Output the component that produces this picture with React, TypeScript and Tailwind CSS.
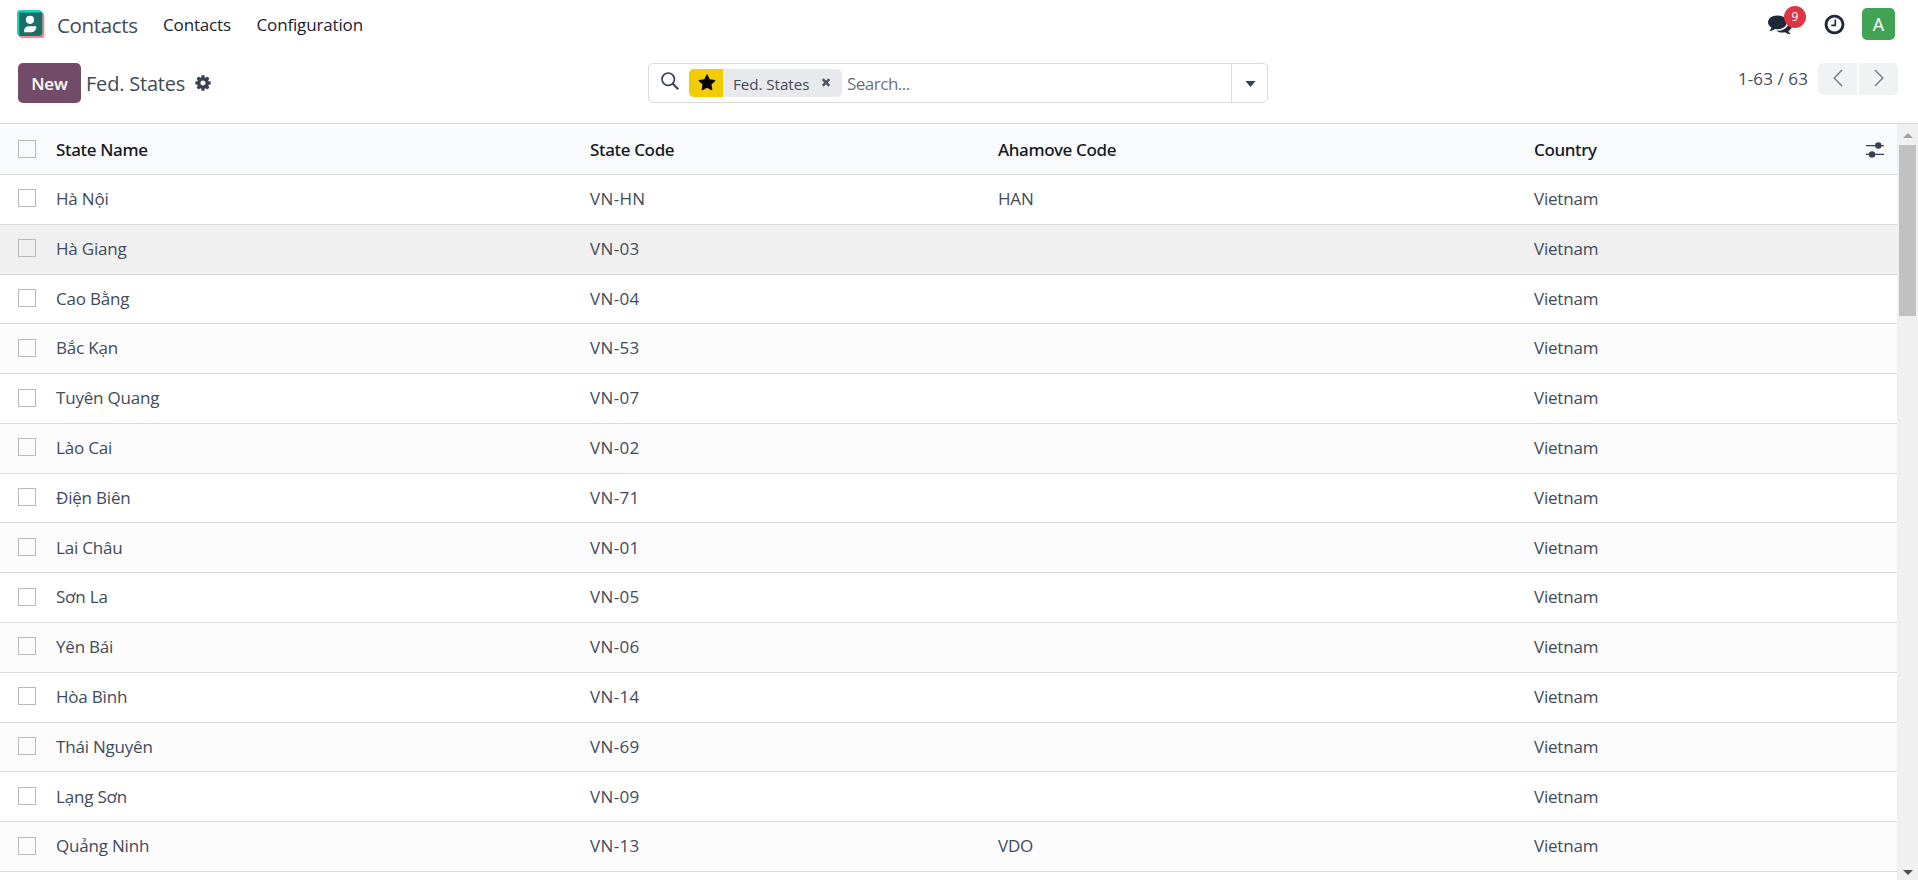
import React from "react";

type State = { name: string; code: string; ahamove?: string };

const STATES: State[] = [
  { name: "Hà Nội", code: "VN-HN", ahamove: "HAN" },
  { name: "Hà Giang", code: "VN-03" },
  { name: "Cao Bằng", code: "VN-04" },
  { name: "Bắc Kạn", code: "VN-53" },
  { name: "Tuyên Quang", code: "VN-07" },
  { name: "Lào Cai", code: "VN-02" },
  { name: "Điện Biên", code: "VN-71" },
  { name: "Lai Châu", code: "VN-01" },
  { name: "Sơn La", code: "VN-05" },
  { name: "Yên Bái", code: "VN-06" },
  { name: "Hòa Bình", code: "VN-14" },
  { name: "Thái Nguyên", code: "VN-69" },
  { name: "Lạng Sơn", code: "VN-09" },
  { name: "Quảng Ninh", code: "VN-13", ahamove: "VDO" },
];

const PATHS = {
  cog: "M1152 896q0-106-75-181t-181-75-181 75-75 181 75 181 181 75 181-75 75-181zm512-109v222q0 12-8 23t-20 13l-185 28q-19 54-39 91 35 50 107 138 10 12 10 25t-9 23q-27 37-99 108t-94 71q-12 0-26-9l-138-108q-44 23-91 38-16 136-29 186-7 28-36 28h-222q-14 0-24.5-8.5t-11.5-21.5l-28-184q-49-16-90-37l-141 107q-10 9-25 9-14 0-25-11-126-114-165-168-7-10-7-23 0-12 8-23 15-21 51-66.5t54-70.5q-27-50-41-99l-183-27q-13-2-21-12.5t-8-23.5v-222q0-12 8-23t19-13l186-28q14-46 39-92-40-57-107-138-10-12-10-24 0-10 9-23 26-36 98.5-107.5t94.5-71.5q13 0 26 10l138 107q44-23 91-38 16-136 29-186 7-28 36-28h222q14 0 24.5 8.5t11.5 21.5l28 184q49 16 90 37l142-107q9-9 24-9 13 0 25 10 129 119 165 170 7 8 7 22 0 12-8 23-15 21-51 66.5t-54 70.5q26 50 41 98l183 28q13 2 21 12.5t8 23.5z",
  comments:
    "M1408 768q0 139-94 257t-256.5 186.5-353.5 68.5q-86 0-176-16-124 88-278 128-36 9-86 16h-3q-11 0-20.5-8t-11.5-21q-1-3-1-6.5t.5-6.5 2-6l2.5-5 3.5-5.5 4-5 4.5-5 4-4.5q5-6 23-25t26-29.5 22.5-29 25-38.5 20.5-44q-124-72-195-177t-71-224q0-139 94-257t256.5-186.5 353.5-68.5 353.5 68.5 256.5 186.5 94 257zm384 256q0 120-71 224.5t-195 176.5q10 24 20.5 44t25 38.5 22.5 29 26 29.5 23 25q1 1 4 4.5t4.5 5 4 5 3.5 5.5l2.5 5 2 6 .5 6.5-1 6.5q-3 14-13 22t-22 7q-50-7-86-16-154-40-278-128-90 16-176 16-271 0-472-132 58 4 88 4 161 0 309-45t264-129q125-92 192-212t67-254q0-77-23-152 129 71 204 178t75 230z",
  clock:
    "M1024 544v448q0 14-9 23t-23 9h-320q-14 0-23-9t-9-23v-64q0-14 9-23t23-9h224v-352q0-14 9-23t23-9h64q14 0 23 9t9 23zm416 352q0-148-73-273t-198-198-273-73-273 73-198 198-73 273 73 273 198 198 273 73 273-73 198-198 73-273zm224 0q0 209-103 385.5t-279.5 279.5-385.5 103-385.5-103-279.5-279.5-103-385.5 103-385.5 279.5-279.5 385.5-103 385.5 103 279.5 279.5 103 385.5z",
  star: "M1728 647q0 22-26 48l-363 354 86 500q1 7 1 20 0 21-10.5 35.5t-30.5 14.5q-19 0-40-12l-449-236-449 236q-22 12-40 12-21 0-31.5-14.5t-10.5-35.5q0-6 2-20l86-500-364-354q-25-27-25-48 0-37 56-46l502-73 225-455q19-41 49-41t49 41l225 455 502 73q56 9 56 46z",
  times:
    "M1490 1322q0 40-28 68l-136 136q-28 28-68 28t-68-28l-294-294-294 294q-28 28-68 28t-68-28l-136-136q-28-28-28-68t28-68l294-294-294-294q-28-28-28-68t28-68l136-136q28-28 68-28t68 28l294 294 294-294q28-28 68-28t68 28l136 136q28 28 28 68t-28 68l-294 294 294 294q28 28 28 68z",
};

function Glyph({ name, className }: { name: keyof typeof PATHS; className: string }) {
  return (
    <svg viewBox="0 0 1792 1792" fill="currentColor" className={className} aria-hidden="true">
      <path d={PATHS[name]} />
    </svg>
  );
}

function AppLogo() {
  return (
    <svg viewBox="0 0 28 28" className="h-7 w-7" aria-hidden="true">
      <rect x="2" y="2.6" width="25.4" height="25.6" rx="3.4" fill="#fc868b" />
      <rect x="0" y="0" width="25.3" height="26" rx="3.4" fill="#1ad3bb" />
      <path d="M2.2 2.6H25.3V22.6a3.4 3.4 0 0 1-3.4 3.4H2.2z" fill="#1a6f66" />
      <circle cx="13" cy="9.8" r="4.1" fill="#fff" />
      <path d="M7.1 22.2v-1.4a4.6 4.6 0 0 1 4.6-4.6h7.6v1.4a4.6 4.6 0 0 1-4.6 4.6z" fill="#fff" />
    </svg>
  );
}

function TopBar() {
  return (
    <header className="flex h-[49px] items-center pr-[23px] pl-[17px] text-[#111827]">
      <div className="mt-[-1px]"><AppLogo /></div>
      <span className="ml-[12px] w-[106px] pt-[2px] text-[20.5px] tracking-[-0.34px] text-[#424b5a]">Contacts</span>
      <nav className="flex text-[17px] tracking-[-0.15px] text-[#1a2230]">
        <a className="w-[93.5px]">Contacts</a>
        <a>Configuration</a>
      </nav>
      <div className="ml-auto flex items-center pb-[1px]">
        <div className="relative mr-[31px] h-[24px] w-[24px] text-[#1f2937]">
          <Glyph name="comments" className="h-[24px] w-[24px]" />
          <span className="absolute top-[-6px] left-[16px] flex h-[22px] w-[22px] items-center justify-center rounded-full bg-[#dc3545] text-[12px] leading-none text-white">
            9
          </span>
        </div>
        <Glyph name="clock" className="mr-[16px] h-[23px] w-[23px] text-[#1f2937]" />
        <span className="flex h-[32px] w-[33px] items-center justify-center rounded-[5px] bg-[#42a354] text-[18px] text-white">
          A
        </span>
      </div>
    </header>
  );
}

function SearchBox() {
  return (
    <div className="flex h-[40px] w-[620px] rounded-[5px] border border-[#d8dadd]">
      <div className="flex flex-1 items-center pl-[12px]">
        <svg viewBox="0 0 18 18" className="mt-[-4px] h-[18px] w-[18px] text-[#374151]" fill="none" stroke="currentColor" aria-hidden="true">
          <circle cx="7.2" cy="7.2" r="6.2" strokeWidth="1.7" />
          <path d="M11.6 11.6L17.2 17.2" strokeWidth="2.1" />
        </svg>
        <div className="ml-[10px] flex h-[28px] items-center overflow-hidden rounded-[5px] bg-[#e7e9ed]">
          <span className="flex h-full w-[34px] items-center justify-center bg-[#f3cc00] pl-[1px] text-black">
            <Glyph name="star" className="h-[18px] w-[18px]" />
          </span>
          <span className="w-[88px] pt-[2px] pl-[10px] text-[15.2px] tracking-[-0.05px] whitespace-nowrap text-[#424b5a]">Fed. States</span>
          <Glyph name="times" className="mt-[-3px] mr-[10px] ml-[9px] h-[12px] w-[12px] text-[#4b5563]" />
        </div>
        <span className="ml-[5px] pt-[1px] text-[17px] tracking-[-0.5px] text-[#6b7280]">Search...</span>
      </div>
      <button className="flex w-[36px] items-center justify-center border-l border-[#d8dadd]">
        <svg viewBox="0 0 10 6" className="mt-[2px] ml-[1px] h-[6px] w-[11px]" aria-hidden="true">
          <path d="M0 0H10L5 6z" fill="#374151" />
        </svg>
      </button>
    </div>
  );
}

function PagerButton({ d, className }: { d: string; className: string }) {
  return (
    <button className={`flex h-[32px] w-[39px] items-center justify-center bg-[#f1f2f4] ${className}`}>
      <svg viewBox="0 0 10 18" className="mt-[-2px] h-[18px] w-[10px]" fill="none" stroke="#7c7f86" strokeWidth="1.5" aria-hidden="true">
        <path d={d} />
      </svg>
    </button>
  );
}

function ControlPanel() {
  return (
    <section className="flex h-[74px] items-start pr-[20px] pl-[18px] pt-[14px]">
      <div className="flex h-[40px] w-[630px] items-center">
        <button className="h-[40px] w-[63px] rounded-[5px] bg-[#714b67] pt-[1px] text-[17px] font-semibold tracking-[-0.1px] text-white">New</button>
        <span className="ml-[5px] w-[108px] pt-[1px] text-[20px] tracking-[-0.2px] whitespace-nowrap text-[#424b5a]">Fed. States</span>
        <Glyph name="cog" className="h-[18px] w-[18px] text-[#374151]" />
      </div>
      <SearchBox />
      <div className="ml-auto flex items-center">
        <span className="mr-[10px] text-[17px] tracking-[0.1px] text-[#424b5a]">1-63 / 63</span>
        <PagerButton d="M9 1L1.2 9L9 17" className="mr-[2px] rounded-l-[5px]" />
        <PagerButton d="M1 1L8.8 9L1 17" className="rounded-r-[5px]" />
      </div>
    </section>
  );
}

const GRID = "grid grid-cols-[56px_534px_408px_536px_1fr] items-center border-b border-[#d8dadd]";

function Checkbox() {
  return <span className="mt-[-1px] ml-[18px] block h-[18px] w-[18px] border border-[#b9babd]" />;
}

function StateTable() {
  return (
    <div className="flex-1 overflow-hidden text-[17px] tracking-[-0.2px] text-[#424b5a]">
      <div className={`${GRID} h-[51px] bg-[#f9fafb] pt-[1px] font-['Noto_Sans','Open_Sans',sans-serif] font-medium tracking-[-0.35px] text-[#111827]`}>
        <Checkbox />
        <span>State Name</span>
        <span>State Code</span>
        <span>Ahamove Code</span>
        <span className="flex items-center justify-between pr-[13px]">
          Country
          <svg viewBox="0 0 18 16" className="h-[16px] w-[18px]" fill="#374151" aria-hidden="true">
            <path d="M0 2.9h18v1.3H0zM0 11.8h18v1.3H0z" />
            <circle cx="12.3" cy="3.5" r="3.2" />
            <circle cx="6" cy="12.4" r="3.2" />
          </svg>
        </span>
      </div>
      {STATES.map((s, i) => (
        <div
          key={s.name}
          className={`${GRID} h-[49.79px] pb-px ${i === 1 ? "bg-[#f0f0f0]" : i % 2 ? "bg-[#fcfcfc]" : "bg-white"}`}
        >
          <Checkbox />
          <span>{s.name}</span>
          <span className="tracking-[0.35px]">{s.code}</span>
          <span>{s.ahamove}</span>
          <span>Vietnam</span>
        </div>
      ))}
    </div>
  );
}

function Scrollbar() {
  return (
    <div className="flex w-[21px] flex-col items-center bg-[#f0f0f0]">
      <svg viewBox="0 0 10 5" className="mt-[9px] h-[5px] w-[10px]" fill="#a3a3a3" aria-hidden="true">
        <path d="M5 0L10 5H0z" />
      </svg>
      <div className="mt-[7px] h-[171px] w-[17px] bg-[#c1c1c1]" />
      <svg viewBox="0 0 10 5" className="mt-auto mb-[5px] h-[5px] w-[10px]" fill="#505050" aria-hidden="true">
        <path d="M0 0H10L5 5z" />
      </svg>
    </div>
  );
}

export default function App() {
  return (
    <div className="flex h-[880px] w-[1918px] flex-col overflow-hidden bg-white font-['Open_Sans','Noto_Sans',sans-serif]">
      <TopBar />
      <ControlPanel />
      <main className="flex min-h-0 flex-1 border-t border-[#d8dadd]">
        <StateTable />
        <Scrollbar />
      </main>
    </div>
  );
}
